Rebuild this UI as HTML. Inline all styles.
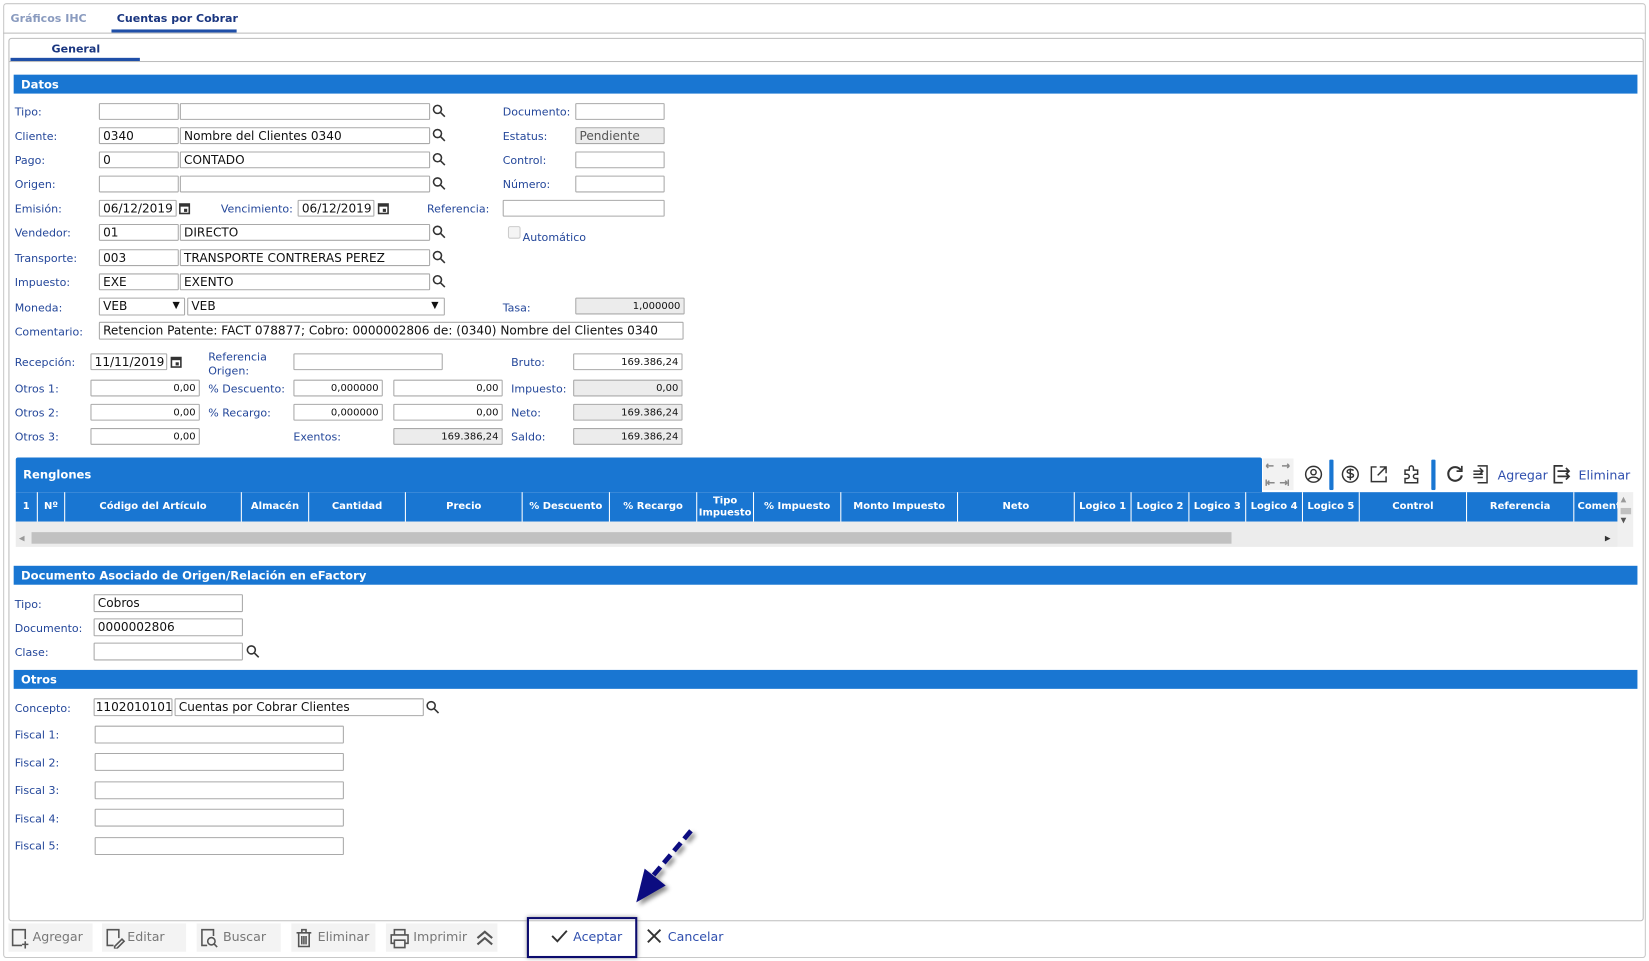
<!DOCTYPE html>
<html><head><meta charset="utf-8"><style>
html,body{margin:0;padding:0;background:#fff;overflow:hidden}
#w{position:absolute;left:0;top:0;width:1568px;height:914px;transform:scale(1.05166);transform-origin:0 0;font-family:"DejaVu Sans","Liberation Sans",sans-serif;font-size:10.5px;color:#1f3c88}
.a{position:absolute}
.l{position:absolute;white-space:nowrap;color:#24479a;font-size:10.5px;line-height:12px;margin-top:1px}
.i{position:absolute;height:16px;border:1px solid #a9a9a9;background:#fff;box-sizing:border-box;font-size:11.5px;color:#111;line-height:15px;padding:0 3px;white-space:nowrap;overflow:hidden;border-radius:1px}
.g{background:#ececec}
.r{text-align:right;font-size:9.5px}
.bar{position:absolute;background:#1976d2;color:#fff;font-weight:bold;font-size:11px;line-height:19px;padding-left:7px;box-sizing:border-box}
.th{position:absolute;top:0;height:28px;border-left:1px solid #fff;box-sizing:border-box;color:#fff;font-weight:bold;font-size:9.5px;text-align:center;line-height:28px;white-space:nowrap;overflow:hidden}
.tb{position:absolute;top:878px;height:27px;background:#f3f3f3;color:#777;font-size:12px;line-height:27px}
</style></head><body><div id="w">
<div class="a" style="left:3px;top:3px;width:1562px;height:908px;border:1px solid #c8c8c8;border-radius:3px;box-sizing:border-box"></div>
<div class="l" style="left:10px;top:11px;color:#8a9bbf;font-weight:bold;font-size:10.5px">Gráficos IHC</div>
<div class="l" style="left:111px;top:11px;color:#1a3680;font-weight:bold;font-size:10.5px">Cuentas por Cobrar</div>
<div class="a" style="left:106px;top:28px;width:119px;height:3px;background:#1f4fa8"></div>
<div class="a" style="left:3px;top:31px;width:1562px;height:1px;background:#bdbdbd"></div>
<div class="a" style="left:8px;top:36px;width:1555px;height:840px;border:1px solid #bdbdbd;border-radius:3px;box-sizing:border-box"></div>
<div class="l" style="left:49px;top:40px;color:#1a3680;font-weight:bold">General</div>
<div class="a" style="left:10px;top:55px;width:123px;height:3px;background:#1f4fa8"></div>
<div class="a" style="left:9px;top:58px;width:1553px;height:1px;background:#bdbdbd"></div>

<div class="bar" style="left:13px;top:71px;width:1544px;height:18px">Datos</div>

<div class="l" style="left:14px;top:100px">Tipo:</div>
<div class="i" style="left:94px;top:98px;width:76px"></div><div class="i" style="left:171px;top:98px;width:238px"></div>
<div class="l" style="left:14px;top:123px">Cliente:</div>
<div class="i" style="left:94px;top:121px;width:76px">0340</div><div class="i" style="left:171px;top:121px;width:238px">Nombre del Clientes 0340</div>
<div class="l" style="left:14px;top:146px">Pago:</div>
<div class="i" style="left:94px;top:144px;width:76px">0</div><div class="i" style="left:171px;top:144px;width:238px">CONTADO</div>
<div class="l" style="left:14px;top:169px">Origen:</div>
<div class="i" style="left:94px;top:167px;width:76px"></div><div class="i" style="left:171px;top:167px;width:238px"></div>
<div class="l" style="left:14px;top:192px">Emisión:</div>
<div class="i" style="left:94px;top:190px;width:74px">06/12/2019</div>
<div class="l" style="left:210px;top:192px">Vencimiento:</div>
<div class="i" style="left:283px;top:190px;width:73px">06/12/2019</div>
<div class="l" style="left:406px;top:192px">Referencia:</div>
<div class="i" style="left:478px;top:190px;width:154px"></div>
<div class="l" style="left:14px;top:215px">Vendedor:</div>
<div class="i" style="left:94px;top:213px;width:76px">01</div><div class="i" style="left:171px;top:213px;width:238px">DIRECTO</div>
<div class="l" style="left:14px;top:239px">Transporte:</div>
<div class="i" style="left:94px;top:237px;width:76px">003</div><div class="i" style="left:171px;top:237px;width:238px">TRANSPORTE CONTRERAS PEREZ</div>
<div class="l" style="left:14px;top:262px">Impuesto:</div>
<div class="i" style="left:94px;top:260px;width:76px">EXE</div><div class="i" style="left:171px;top:260px;width:238px">EXENTO</div>
<div class="l" style="left:14px;top:286px">Moneda:</div>
<div class="i" style="left:94px;top:283px;width:82px;height:17px">VEB<span style="position:absolute;right:4px;font-size:9px">▼</span></div>
<div class="i" style="left:178px;top:283px;width:245px;height:17px">VEB<span style="position:absolute;right:5px;font-size:9px">▼</span></div>
<div class="l" style="left:14px;top:309px">Comentario:</div>
<div class="i" style="left:94px;top:306px;width:556px;height:17px">Retencion Patente: FACT 078877; Cobro: 0000002806 de: (0340) Nombre del Clientes 0340</div>

<div class="l" style="left:478px;top:100px">Documento:</div><div class="i" style="left:547px;top:98px;width:85px"></div>
<div class="l" style="left:478px;top:123px">Estatus:</div><div class="i g" style="left:547px;top:121px;width:85px;color:#555">Pendiente</div>
<div class="l" style="left:478px;top:146px">Control:</div><div class="i" style="left:547px;top:144px;width:85px"></div>
<div class="l" style="left:478px;top:169px">Número:</div><div class="i" style="left:547px;top:167px;width:85px"></div>
<div class="a" style="left:483px;top:215px;width:10px;height:10px;border:1px solid #ccc;background:#f4f4f4;border-radius:2px"></div>
<div class="l" style="left:497px;top:219px">Automático</div>
<div class="l" style="left:478px;top:286px">Tasa:</div><div class="i g r" style="left:547px;top:283px;width:104px">1,000000</div>

<svg class="a" style="left:411px;top:99px" width="14" height="180" viewBox="0 0 14 180" fill="none" stroke="#333" stroke-width="1.5">
<g id="s"><circle cx="5" cy="5" r="3.8"/><path d="M8 8l4 4"/></g>
<use href="#s" y="23"/><use href="#s" y="46"/><use href="#s" y="69"/><use href="#s" y="115"/><use href="#s" y="139"/><use href="#s" y="162"/>
</svg>
<svg class="a" style="left:170px;top:192px" width="12" height="12" viewBox="0 0 12 12"><rect x="1" y="2" width="9" height="9" fill="none" stroke="#333" stroke-width="1.5"/><rect x="1" y="2" width="9" height="2.5" fill="#333"/><rect x="5" y="6.5" width="3" height="3" fill="#333"/></svg>
<svg class="a" style="left:359px;top:192px" width="12" height="12" viewBox="0 0 12 12"><rect x="1" y="2" width="9" height="9" fill="none" stroke="#333" stroke-width="1.5"/><rect x="1" y="2" width="9" height="2.5" fill="#333"/><rect x="5" y="6.5" width="3" height="3" fill="#333"/></svg>

<div class="l" style="left:14px;top:338px">Recepción:</div>
<div class="i" style="left:86px;top:336px;width:73px">11/11/2019</div>
<svg class="a" style="left:162px;top:338px" width="12" height="12" viewBox="0 0 12 12"><rect x="1" y="2" width="9" height="9" fill="none" stroke="#333" stroke-width="1.5"/><rect x="1" y="2" width="9" height="2.5" fill="#333"/><rect x="5" y="6.5" width="3" height="3" fill="#333"/></svg>
<div class="l" style="left:198px;top:333px;line-height:13px">Referencia<br>Origen:</div>
<div class="i" style="left:279px;top:336px;width:142px"></div>
<div class="l" style="left:486px;top:338px">Bruto:</div><div class="i r" style="left:545px;top:336px;width:104px">169.386,24</div>
<div class="l" style="left:14px;top:363px">Otros 1:</div><div class="i r" style="left:86px;top:361px;width:104px">0,00</div>
<div class="l" style="left:198px;top:363px">% Descuento:</div><div class="i r" style="left:279px;top:361px;width:85px">0,000000</div>
<div class="i r" style="left:374px;top:361px;width:104px">0,00</div>
<div class="l" style="left:486px;top:363px">Impuesto:</div><div class="i g r" style="left:545px;top:361px;width:104px">0,00</div>
<div class="l" style="left:14px;top:386px">Otros 2:</div><div class="i r" style="left:86px;top:384px;width:104px">0,00</div>
<div class="l" style="left:198px;top:386px">% Recargo:</div><div class="i r" style="left:279px;top:384px;width:85px">0,000000</div>
<div class="i r" style="left:374px;top:384px;width:104px">0,00</div>
<div class="l" style="left:486px;top:386px">Neto:</div><div class="i g r" style="left:545px;top:384px;width:104px">169.386,24</div>
<div class="l" style="left:14px;top:409px">Otros 3:</div><div class="i r" style="left:86px;top:407px;width:104px">0,00</div>
<div class="l" style="left:279px;top:409px">Exentos:</div><div class="i g r" style="left:374px;top:407px;width:104px">169.386,24</div>
<div class="l" style="left:486px;top:409px">Saldo:</div><div class="i g r" style="left:545px;top:407px;width:104px">169.386,24</div>

<div class="bar" style="left:15px;top:435px;width:1185px;height:33px;line-height:34px;border-radius:2px 2px 0 0">Renglones</div>
<div class="a" style="left:1201px;top:436px;width:29px;height:30px;background:#f2f2f2"></div>
<svg class="a" style="left:1201px;top:436px" width="350" height="30" viewBox="0 0 350 30" fill="none" stroke="#333" stroke-width="1.4">
<path d="M3 7h7M3 7l2-2M3 7l2 2M18 7h7M25 7l-2-2M25 7l-2 2" stroke="#888"/>
<path d="M3 20v6M4 23h7M4 23l2-2M4 23l2 2M24 20v6M16 23h7M23 23l-2-2M23 23l-2 2" stroke="#888"/>
<circle cx="48" cy="15" r="7.5"/><circle cx="48" cy="13" r="2.5"/><path d="M43 20c2-3 8-3 10 0"/>
<rect x="63" y="1" width="4" height="29" fill="#1976d2" stroke="none" rx="1"/>
<circle cx="83" cy="15" r="7.5"/><path d="M86 11.5c-1-1.5-6-1.5-6 1s6 1 6 3.5-5 2.5-6 1M83 9.5v11"/>
<path d="M108 8h-5v14h14v-5M111 8h6v6M117 8l-8 8"/>
<path d="M135 11h4v-2a2 2 0 014 0v2h4v4h-2a2 2 0 000 4h2v4h-12v-4h2a2 2 0 000-4h-2z"/>
<rect x="160" y="1" width="4" height="29" fill="#1976d2" stroke="none" rx="1"/>
<path d="M188 11a6.5 6.5 0 10 1 5" stroke-width="2"/><path d="M189 7v5h-5" stroke-width="1.6"/>
<path d="M204 7h9v16h-9M200 12h9M206 9l3 3-3 3M200 15h9M200 18h9"/>
<path d="M285 7h-8v16h8M280 12h11M288 9l3 3-3 3M280 17h11M288 14l3 3-3 3" stroke-width="1.6"/>
</svg>
<div class="l" style="left:1424px;top:445px;font-size:12px;color:#2f4fae">Agregar</div>
<div class="l" style="left:1501px;top:445px;font-size:12px;color:#2f4fae">Eliminar</div>
<div class="a" style="left:15px;top:468px;width:1523px;height:28px;background:#1976d2">
<div class="th" style="left:0;width:20px;border:0">1</div>
<div class="th" style="left:20px;width:26px">Nº</div>
<div class="th" style="left:46px;width:168px">Código del Artículo</div>
<div class="th" style="left:214px;width:64px">Almacén</div>
<div class="th" style="left:278px;width:92px">Cantidad</div>
<div class="th" style="left:370px;width:111px">Precio</div>
<div class="th" style="left:481px;width:83px">% Descuento</div>
<div class="th" style="left:564px;width:83px">% Recargo</div>
<div class="th" style="left:647px;width:54px;line-height:11px;padding-top:3px">Tipo<br>Impuesto</div>
<div class="th" style="left:701px;width:83px">% Impuesto</div>
<div class="th" style="left:784px;width:111px">Monto Impuesto</div>
<div class="th" style="left:895px;width:111px">Neto</div>
<div class="th" style="left:1006px;width:54px">Logico 1</div>
<div class="th" style="left:1060px;width:55px">Logico 2</div>
<div class="th" style="left:1115px;width:54px">Logico 3</div>
<div class="th" style="left:1169px;width:54px">Logico 4</div>
<div class="th" style="left:1223px;width:54px">Logico 5</div>
<div class="th" style="left:1277px;width:102px">Control</div>
<div class="th" style="left:1379px;width:102px">Referencia</div>
<div class="th" style="left:1481px;width:42px;text-align:left;padding-left:3px">Comentario</div>
</div>
<div class="a" style="left:1538px;top:468px;width:15px;height:52px;background:#f0f0f0"></div>
<div class="a" style="left:1541px;top:483px;width:10px;height:6px;background:#c0c0c0"></div>
<div class="l" style="left:1541px;top:468px;font-size:7px;color:#999">▲</div>
<div class="l" style="left:1541px;top:488px;font-size:7px;color:#555">▼</div>
<div class="a" style="left:15px;top:496px;width:1523px;height:24px;background:#ececec"></div>
<div class="a" style="left:30px;top:506px;width:1141px;height:11px;background:#c1c1c1"></div>
<div class="l" style="left:18px;top:505px;font-size:7px;color:#999">◀</div>
<div class="l" style="left:1526px;top:505px;font-size:7px;color:#333">▶</div>

<div class="bar" style="left:13px;top:538px;width:1544px;height:18px">Documento Asociado de Origen/Relación en eFactory</div>
<div class="l" style="left:14px;top:568px">Tipo:</div><div class="i" style="left:89px;top:565px;width:142px;height:17px">Cobros</div>
<div class="l" style="left:14px;top:591px">Documento:</div><div class="i" style="left:89px;top:588px;width:142px;height:17px">0000002806</div>
<div class="l" style="left:14px;top:614px">Clase:</div><div class="i" style="left:89px;top:611px;width:142px;height:17px"></div>
<svg class="a" style="left:234px;top:613px" width="14" height="14" fill="none" stroke="#333" stroke-width="1.5"><circle cx="5" cy="5" r="3.8"/><path d="M8 8l4 4"/></svg>

<div class="bar" style="left:13px;top:637px;width:1544px;height:18px">Otros</div>
<div class="l" style="left:14px;top:667px">Concepto:</div>
<div class="i" style="left:89px;top:664px;width:75px;height:17px;padding:0 1px">1102010101</div>
<div class="i" style="left:166px;top:664px;width:237px;height:17px">Cuentas por Cobrar Clientes</div>
<svg class="a" style="left:405px;top:666px" width="14" height="14" fill="none" stroke="#333" stroke-width="1.5"><circle cx="5" cy="5" r="3.8"/><path d="M8 8l4 4"/></svg>
<div class="l" style="left:14px;top:692px">Fiscal 1:</div><div class="i" style="left:90px;top:690px;width:237px;height:17px"></div>
<div class="l" style="left:14px;top:719px">Fiscal 2:</div><div class="i" style="left:90px;top:716px;width:237px;height:17px"></div>
<div class="l" style="left:14px;top:745px">Fiscal 3:</div><div class="i" style="left:90px;top:743px;width:237px;height:17px"></div>
<div class="l" style="left:14px;top:772px">Fiscal 4:</div><div class="i" style="left:90px;top:769px;width:237px;height:17px"></div>
<div class="l" style="left:14px;top:798px">Fiscal 5:</div><div class="i" style="left:90px;top:796px;width:237px;height:17px"></div>

<div class="tb" style="left:8px;width:80px"><svg class="a" style="left:2px;top:4px" width="20" height="20" fill="none" stroke="#555" stroke-width="1.5"><path d="M11 17H2V2h12v9M14 13v7M11 16h6"/></svg><span style="position:absolute;left:23px">Agregar</span></div>
<div class="tb" style="left:97px;width:80px"><svg class="a" style="left:3px;top:4px" width="20" height="20" fill="none" stroke="#555" stroke-width="1.5"><path d="M8 17H2V2h11v8M9 18l7-7 2 2-7 7H9z"/></svg><span style="position:absolute;left:24px">Editar</span></div>
<div class="tb" style="left:187px;width:80px"><svg class="a" style="left:3px;top:4px" width="20" height="20" fill="none" stroke="#555" stroke-width="1.5"><path d="M7 17H2V2h11v6"/><circle cx="11" cy="13" r="3.5"/><path d="M13.5 15.5l3 3"/></svg><span style="position:absolute;left:25px">Buscar</span></div>
<div class="tb" style="left:277px;width:80px"><svg class="a" style="left:2px;top:4px" width="20" height="20" fill="none" stroke="#555" stroke-width="1.5"><path d="M3 5h14M8 5V2h4v3M5 5v13h10V5M8 8v8M10 8v8M12 8v8"/></svg><span style="position:absolute;left:25px">Eliminar</span></div>
<div class="tb" style="left:367px;width:106px"><svg class="a" style="left:3px;top:4px" width="20" height="20" fill="none" stroke="#555" stroke-width="1.5"><path d="M5 7V2h10v5M5 15H2V7h16v8h-3M5 12h10v7H5z"/></svg><span style="position:absolute;left:26px">Imprimir</span><svg class="a" style="left:84px;top:5px" width="20" height="18" fill="none" stroke="#555" stroke-width="2"><path d="M3 9l7-6 7 6M3 15l7-6 7 6"/></svg></div>
<div class="a" style="left:501px;top:872px;width:105px;height:39px;border:2px solid #0c0c6e;box-sizing:border-box;box-shadow:0 0 4px #999"></div>
<svg class="a" style="left:522px;top:881px" width="20" height="18" fill="none" stroke="#333" stroke-width="1.8"><path d="M3 9l5 5 9-10"/></svg>
<div class="l" style="left:545px;top:884px;font-size:12px;color:#2f4fae">Aceptar</div>
<svg class="a" style="left:613px;top:881px" width="18" height="18" fill="none" stroke="#333" stroke-width="1.8"><path d="M3 3l12 12M15 3L3 15"/></svg>
<div class="l" style="left:635px;top:884px;font-size:12px;color:#2f4fae">Cancelar</div>
<svg class="a" style="left:595px;top:780px" width="80" height="85"><g style="filter:drop-shadow(3px 3px 2px rgba(0,0,0,.45))"><path d="M62 10L24 55" stroke="#0c0c80" stroke-width="4.5" stroke-dasharray="10 5" fill="none"/><path d="M10 78L18 46L38 62z" fill="#0c0c80"/></g></svg>
</div></body></html>
